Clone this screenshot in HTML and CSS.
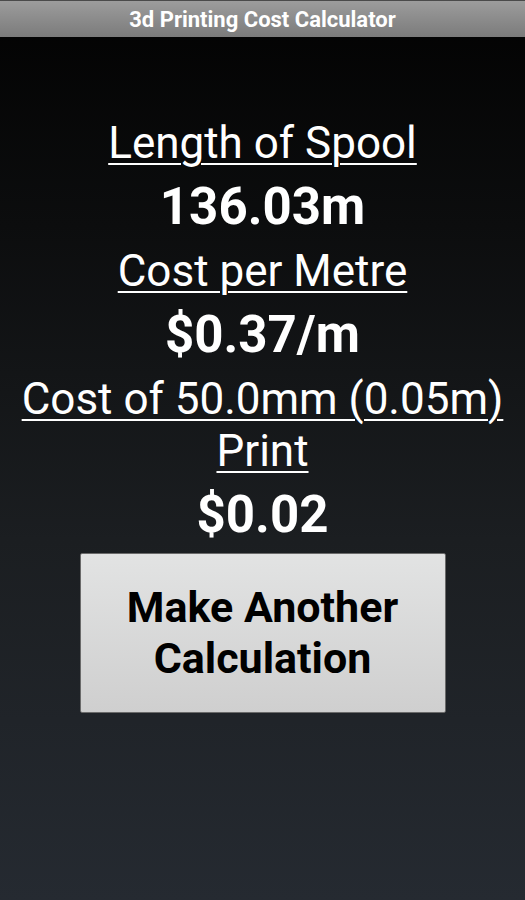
FILE: index.html
```html
<!DOCTYPE html>
<html lang="en">
<head>
    <meta charset="UTF-8">
    <title>3d Printing Cost Calculator</title>
    <link rel="stylesheet" href="styles.css">
</head>
<body>
    <div class="titlebar">3d Printing Cost Calculator</div>
    <div class="content">
        <div class="label">Length of Spool</div>
        <div class="value">136.03m</div>
        <div class="label">Cost per Metre</div>
        <div class="value">$0.37/m</div>
        <div class="label">Cost of 50.0mm (0.05m) Print</div>
        <div class="value">$0.02</div>
        <button class="again">Make Another Calculation</button>
    </div>
</body>
</html>
```
FILE: styles.css
```css
body, html {
    margin: 0;
    width: 100%;
    height: 100%;
}
body {
    font-family: Roboto, "Liberation Sans", sans-serif;
    background: linear-gradient(to bottom, #020202 0%, #0c0d0e 25%, #1b1e21 60%, #252a31 100%);
    color: #fff;
    display: flex;
    flex-direction: column;
}
.titlebar {
    height: 37px;
    line-height: 37px;
    text-align: center;
    font-size: 22px;
    font-weight: bold;
    background: linear-gradient(to bottom, #9c9c9c, #7b7b7b);
    border-top: 1px solid #4a4a4a;
    box-sizing: border-box;
}
.content {
    display: flex;
    flex-direction: column;
    align-items: center;
    text-align: center;
    padding: 80px 10px 0;
}
.label {
    font-size: 44px;
    line-height: 52px;
    text-decoration: underline;
    text-decoration-thickness: 2px;
    text-underline-offset: 5px;
}
.value {
    font-size: 51px;
    font-weight: bold;
    line-height: 76px;
}
.again {
    width: 366px;
    height: 160px;
    margin-top: 0;
    font-family: Roboto, "Liberation Sans", sans-serif;
    font-size: 43px;
    font-weight: bold;
    line-height: 51px;
    color: #000;
    background: linear-gradient(to bottom, #e2e3e3, #cfcfcf);
    border: 1px solid #6a6a6a;
    border-radius: 2px;
    padding: 0 20px;
}
```
